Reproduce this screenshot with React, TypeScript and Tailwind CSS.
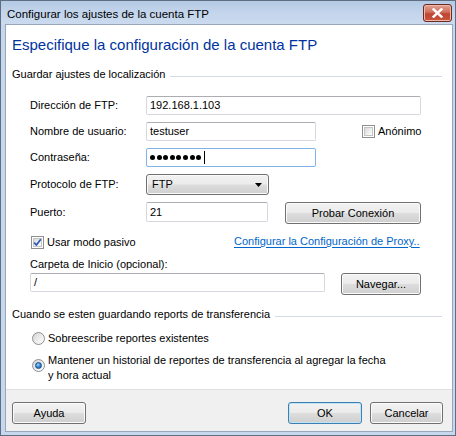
import React from "react";

const FONT = { fontFamily: '"Liberation Sans", Arial, sans-serif' };

function Btn({ children, w, def, h = 22 }: { children: React.ReactNode; w: string; def?: boolean; h?: number }) {
  return (
    <div
      className={`${w} ${h === 22 ? "h-[22px]" : "h-[21px]"} shrink-0 flex items-center justify-center rounded-[3px] border text-[11px] text-black bg-[linear-gradient(to_bottom,#f2f2f2_0%,#ebebeb_48%,#dddddd_52%,#cfcfcf_100%)] ${
        def
          ? "border-[#3c7fb1] shadow-[inset_0_0_0_1px_#bfe3f7]"
          : "border-[#707070] shadow-[inset_0_0_0_1px_#fbfbfb]"
      }`}
    >
      {children}
    </div>
  );
}

function Input({ w, value, focus, h = "h-[19px]" }: { w: string; value?: React.ReactNode; focus?: boolean; h?: string }) {
  return (
    <div
      className={`${w} ${h} shrink-0 flex items-center pl-[3px] rounded-[2px] border bg-white text-[11px] text-black ${
        focus ? "border-[#7eb4ea]" : "border-[#d5d9df] border-t-[#abadb3]"
      }`}
    >
      {value}
    </div>
  );
}

function CheckBox({ checked }: { checked?: boolean }) {
  return (
    <div className="w-[13px] h-[13px] shrink-0 border border-[#8e8f8f] bg-white p-[1px]">
      <div className="w-full h-full border border-[#c4c4c4] bg-[linear-gradient(135deg,#d9d9d9_0%,#f4f4f4_70%,#fdfdfd_100%)] relative">
        {checked && (
          <svg viewBox="0 0 9 9" className="absolute left-[-1px] top-[-1px] w-[9px] h-[9px]">
            <path d="M1.2 4.6 L3.4 7 L7.8 1.2" stroke="#2c57b8" strokeWidth="1.7" fill="none" strokeLinejoin="round" />
          </svg>
        )}
      </div>
    </div>
  );
}

function Radio({ checked }: { checked?: boolean }) {
  return (
    <div className="w-[13px] h-[13px] shrink-0 rounded-full border border-[#8e8f8f] bg-[linear-gradient(135deg,#d4d4d4_0%,#f4f4f4_70%,#ffffff_100%)] flex items-center justify-center">
      {checked && (
        <div className="w-[7px] h-[7px] rounded-full border border-[#1c4f86] bg-[radial-gradient(circle_at_40%_35%,#9fd6ff_0%,#3a8de0_45%,#0d4a9c_100%)]" />
      )}
    </div>
  );
}

export default function App() {
  return (
    <div style={FONT} className="w-[456px] h-[436px] flex flex-col bg-[#c7d8ee] border border-[#5f6e80] overflow-hidden">
      {/* Title bar */}
      <div className="h-[23px] shrink-0 flex items-start bg-[linear-gradient(to_bottom,#b4c9e4_0%,#c3d5ec_50%,#cbdaee_100%)]">
        <div className="pl-[6px] pt-[6px] text-[11.5px] text-black leading-[14px]">Configurar los ajustes de la cuenta FTP</div>
        <div className="ml-auto mr-[3px] mt-[3px] w-[29px] h-[18px] rounded-[3px] border border-[#6b2a22] bg-[linear-gradient(to_bottom,#e0a394_0%,#d0705d_45%,#bf4530_55%,#c9573e_100%)] shadow-[inset_0_0_0_1px_#f0b6a8] flex items-center justify-center">
          <svg viewBox="0 0 10 9" className="w-[11px] h-[10px]">
            <path d="M1.5 1.2 L8.5 7.8 M8.5 1.2 L1.5 7.8" stroke="#ffffff" strokeWidth="2.2" strokeLinecap="square" />
          </svg>
        </div>
      </div>

      {/* Body */}
      <div className="flex-1 ml-[4px] mr-[2px] mb-[3px] border border-[#97a6b9] bg-white flex flex-col">
        <div className="pl-[6px] mt-[10px] text-[15px] leading-[20px] text-[#0033a0]">
          Especifique la configuración de la cuenta FTP
        </div>

        {/* Section 1 */}
        <div className="mt-[12px] pl-[6px] pr-[10px] flex items-start text-[11px] leading-[14px] text-black">
          <span>Guardar ajustes de localización</span>
          <div className="flex-1 ml-[5px] mt-[9px] h-px bg-[#d5dbe2]" />
        </div>

        <div className="pl-[24px] flex flex-col text-[11px] text-black">
          <div className="mt-[15px] h-[19px] flex items-center">
            <span className="w-[116px] shrink-0">Dirección de FTP:</span>
            <Input w="w-[275px]" value="192.168.1.103" />
          </div>
          <div className="mt-[7px] h-[19px] flex items-center">
            <span className="w-[116px] shrink-0">Nombre de usuario:</span>
            <Input w="w-[170px]" value="testuser" />
            <div className="ml-[46px]">
              <CheckBox />
            </div>
            <span className="ml-[3px]">Anónimo</span>
          </div>
          <div className="mt-[7px] h-[19px] flex items-center">
            <span className="w-[116px] shrink-0">Contraseña:</span>
            <Input
              w="w-[170px]"
              focus
              value={
                <div className="flex items-center gap-[1.6px]">
                  {Array.from({ length: 8 }).map((_, i) => (
                    <div key={i} className="w-[5px] h-[5px] rounded-full bg-black" />
                  ))}
                  <div className="ml-[1px] w-px h-[13px] bg-black" />
                </div>
              }
            />
          </div>
          <div className="mt-[7px] h-[21px] flex items-center">
            <span className="w-[116px] shrink-0">Protocolo de FTP:</span>
            <div className="w-[123px] h-[21px] shrink-0 flex items-center pl-[5px] pr-[6px] rounded-[3px] border border-[#707070] shadow-[inset_0_0_0_1px_#fbfbfb] bg-[linear-gradient(to_bottom,#f2f2f2_0%,#ebebeb_48%,#dddddd_52%,#cfcfcf_100%)]">
              <span>FTP</span>
              <svg viewBox="0 0 7 4" className="ml-auto w-[7px] h-[4px]">
                <path d="M0 0 L7 0 L3.5 4 Z" fill="#000" />
              </svg>
            </div>
          </div>
          <div className="mt-[7px] h-[22px] flex items-start">
            <span className="w-[116px] shrink-0 leading-[20px]">Puerto:</span>
            <Input w="w-[122px]" value="21" h="h-[20px]" />
            <div className="ml-[17px]">
              <Btn w="w-[136px]">Probar Conexión</Btn>
            </div>
          </div>
          <div className="mt-[11px] h-[14px] flex items-center">
            <div className="w-[204px] shrink-0 flex items-center">
              <div className="ml-[1px]">
                <CheckBox checked />
              </div>
              <span className="ml-[3px]">Usar modo pasivo</span>
            </div>
            <span className="text-[#0066cc] underline underline-offset-[2px] -mt-[2px]">
              Configurar la Configuración de Proxy..
            </span>
          </div>
          <div className="mt-[8px] leading-[14px]">Carpeta de Inicio (opcional):</div>
          <div className="mt-[2px] h-[22px] flex items-start">
            <Input w="w-[295px]" value="/" />
            <div className="ml-[16px]">
              <Btn w="w-[80px]">Navegar...</Btn>
            </div>
          </div>
        </div>

        {/* Section 2 */}
        <div className="mt-[12px] pl-[6px] pr-[10px] flex items-start text-[11px] leading-[14px] text-black">
          <span>Cuando se esten guardando reports de transferencia</span>
          <div className="flex-1 ml-[5px] mt-[9px] h-px bg-[#d5dbe2]" />
        </div>
        <div className="pl-[26px] flex flex-col text-[11px] text-black">
          <div className="mt-[10px] h-[14px] flex items-center">
            <Radio />
            <span className="ml-[3px]">Sobreescribe reportes existentes</span>
          </div>
          <div className="mt-[8px] flex items-start">
            <div className="mt-[6px]">
              <Radio checked />
            </div>
            <span className="ml-[3px] leading-[15px]">
              Mantener un historial de reportes de transferencia al agregar la fecha
              <br />y hora actual
            </span>
          </div>
        </div>

        {/* Footer */}
        <div className="mt-auto h-[42px] border-t border-[#dfdfdf] bg-[#f0f0f0] flex items-start pt-[12px] pl-[6px] pr-[9px] text-[11px]">
          <Btn w="w-[74px]">Ayuda</Btn>
          <div className="ml-auto flex gap-[8px]">
            <Btn w="w-[74px]" def>
              OK
            </Btn>
            <Btn w="w-[73px]">Cancelar</Btn>
          </div>
        </div>
      </div>
    </div>
  );
}
